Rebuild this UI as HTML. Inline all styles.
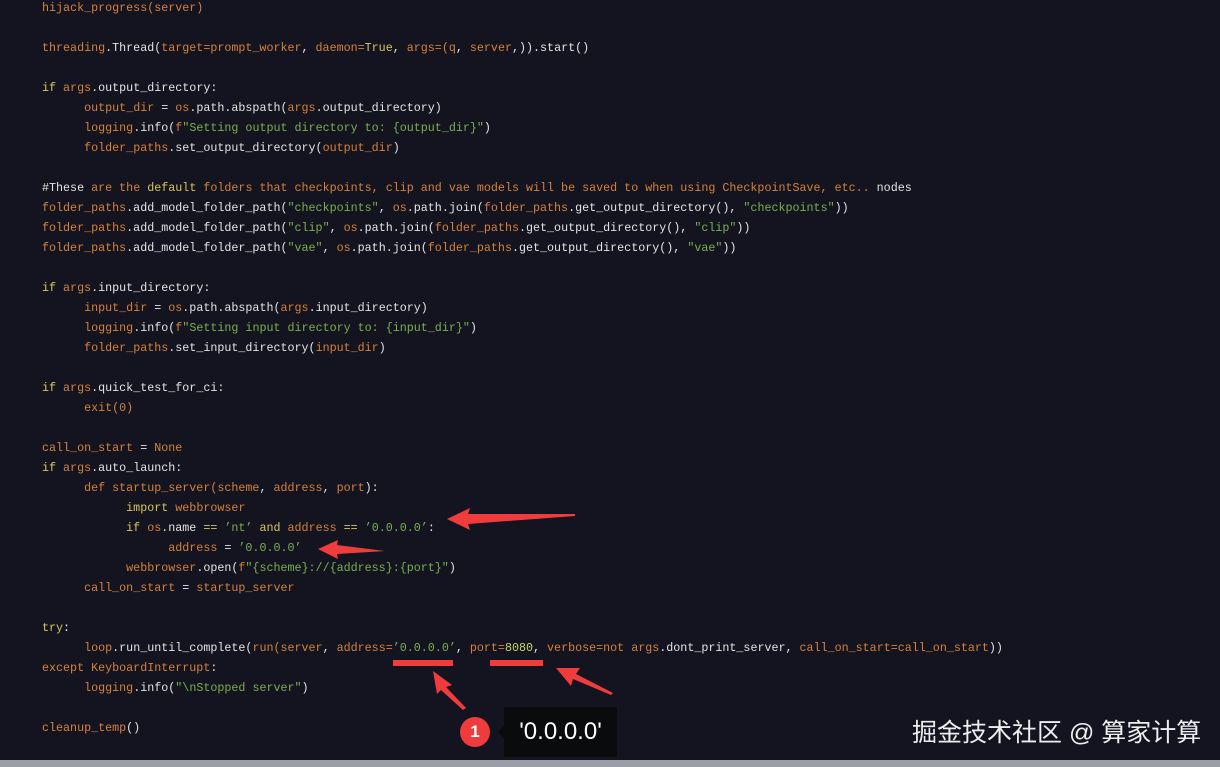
<!DOCTYPE html>
<html><head><meta charset="utf-8"><style>
html,body{margin:0;padding:0;}
body{width:1220px;height:767px;background:#13141f;position:relative;overflow:hidden;}
.code{position:absolute;left:42px;top:-2px;font-family:"Liberation Mono","Noto Sans CJK SC",monospace;font-size:11.7px;line-height:20px;white-space:pre;color:#e4e4e4;}
.o{color:#d6813a}.k{color:#d9c55c}.s{color:#79b04f}.w{color:#e4e4e4}.n{color:#c9d66a}
.bot{position:absolute;left:0;top:760px;width:1220px;height:7px;background:#9a9ea6;}
.badge{position:absolute;left:460px;top:717px;width:30px;height:30px;border-radius:50%;background:#ef3b3b;color:#fff;font:bold 17px "Liberation Sans",sans-serif;text-align:center;line-height:30px;}
.tip{position:absolute;left:504px;top:707px;width:113px;height:50px;background:#0a0b0d;color:#fff;font:24px "Liberation Sans",sans-serif;line-height:50px;text-align:center;}
.tip:before{content:"";position:absolute;left:-6px;top:19px;border-right:6px solid #0a0b0d;border-top:6px solid transparent;border-bottom:6px solid transparent;}
.wm{position:absolute;left:912px;top:713px;color:#eeeeee;font:25px "Liberation Sans","Noto Sans CJK SC",sans-serif;}
</style></head><body>
<div class="code"><span class="o">hijack_progress(server)</span>

<span class="o">threading</span>.Thread(<span class="o">target=prompt_worker</span>, <span class="o">daemon=</span><span class="k">True</span>, <span class="o">args=(q</span>, <span class="o">server</span>,)).start()

<span class="k">if</span> <span class="o">args</span>.output_directory:
      <span class="o">output_dir</span> = <span class="o">os</span>.path.abspath(<span class="o">args</span>.output_directory)
      <span class="o">logging</span>.info(<span class="o">f</span><span class="s">″Setting output directory to: {output_dir}″</span>)
      <span class="o">folder_paths</span>.set_output_directory(<span class="o">output_dir</span>)

<span class="w">#These</span> <span class="o">are the</span> <span class="k">default</span> <span class="o">folders that checkpoints, clip and vae models will be saved to when using CheckpointSave, etc..</span> nodes
<span class="o">folder_paths</span>.add_model_folder_path(<span class="s">″checkpoints″</span>, <span class="o">os</span>.path.join(<span class="o">folder_paths</span>.get_output_directory(), <span class="s">″checkpoints″</span>))
<span class="o">folder_paths</span>.add_model_folder_path(<span class="s">″clip″</span>, <span class="o">os</span>.path.join(<span class="o">folder_paths</span>.get_output_directory(), <span class="s">″clip″</span>))
<span class="o">folder_paths</span>.add_model_folder_path(<span class="s">″vae″</span>, <span class="o">os</span>.path.join(<span class="o">folder_paths</span>.get_output_directory(), <span class="s">″vae″</span>))

<span class="k">if</span> <span class="o">args</span>.input_directory:
      <span class="o">input_dir</span> = <span class="o">os</span>.path.abspath(<span class="o">args</span>.input_directory)
      <span class="o">logging</span>.info(<span class="o">f</span><span class="s">″Setting input directory to: {input_dir}″</span>)
      <span class="o">folder_paths</span>.set_input_directory(<span class="o">input_dir</span>)

<span class="k">if</span> <span class="o">args</span>.quick_test_for_ci:
      <span class="o">exit(0)</span>

<span class="o">call_on_start</span> = <span class="o">None</span>
<span class="k">if</span> <span class="o">args</span>.auto_launch:
      <span class="o">def startup_server(scheme</span>, <span class="o">address</span>, <span class="o">port</span>):
            <span class="k">import</span> <span class="o">webbrowser</span>
            <span class="k">if</span> <span class="o">os</span>.name <span class="k">==</span> <span class="s">’nt’</span> <span class="k">and</span> <span class="o">address</span> <span class="k">==</span> <span class="s">’0.0.0.0’</span>:
                  <span class="o">address</span> = <span class="s">’0.0.0.0’</span>
            <span class="o">webbrowser</span>.open(<span class="o">f</span><span class="s">″{scheme}://{address}:{port}″</span>)
      <span class="o">call_on_start</span> = <span class="o">startup_server</span>

<span class="k">try</span>:
      <span class="o">loop</span>.run_until_complete(<span class="o">run(server</span>, <span class="o">address=</span><span class="s">’0.0.0.0’</span>, <span class="o">port=</span><span class="n">8080</span>, <span class="o">verbose=not args</span>.dont_print_server, <span class="o">call_on_start=call_on_start</span>))
<span class="o">except KeyboardInterrupt</span>:
      <span class="o">logging</span>.info(<span class="s">″\nStopped server″</span>)

<span class="o">cleanup_temp</span>()</div>
<svg width="1220" height="767" style="position:absolute;left:0;top:0">
<g fill="#f03c3c">
<polygon points="447,519 470,508 468,514 575,514 575,516 468,524 470,530"/>
<polygon points="318,549 338,540 337,545 385,551 337,554 338,559"/>
<rect x="393" y="660" width="60" height="6"/>
<rect x="490" y="660" width="53" height="6"/>
<polygon points="433,671 452,685 446,687 466,708 463,710 441,690 437,694"/>
<polygon points="556,668 580,668 576,674 613,693 611,695 573,679 571,686"/>
</g></svg>
<div class="badge">1</div>
<div class="tip">'0.0.0.0'</div>
<div class="wm">掘金技术社区 @ 算家计算</div>
<div class="bot"></div>
</body></html>
